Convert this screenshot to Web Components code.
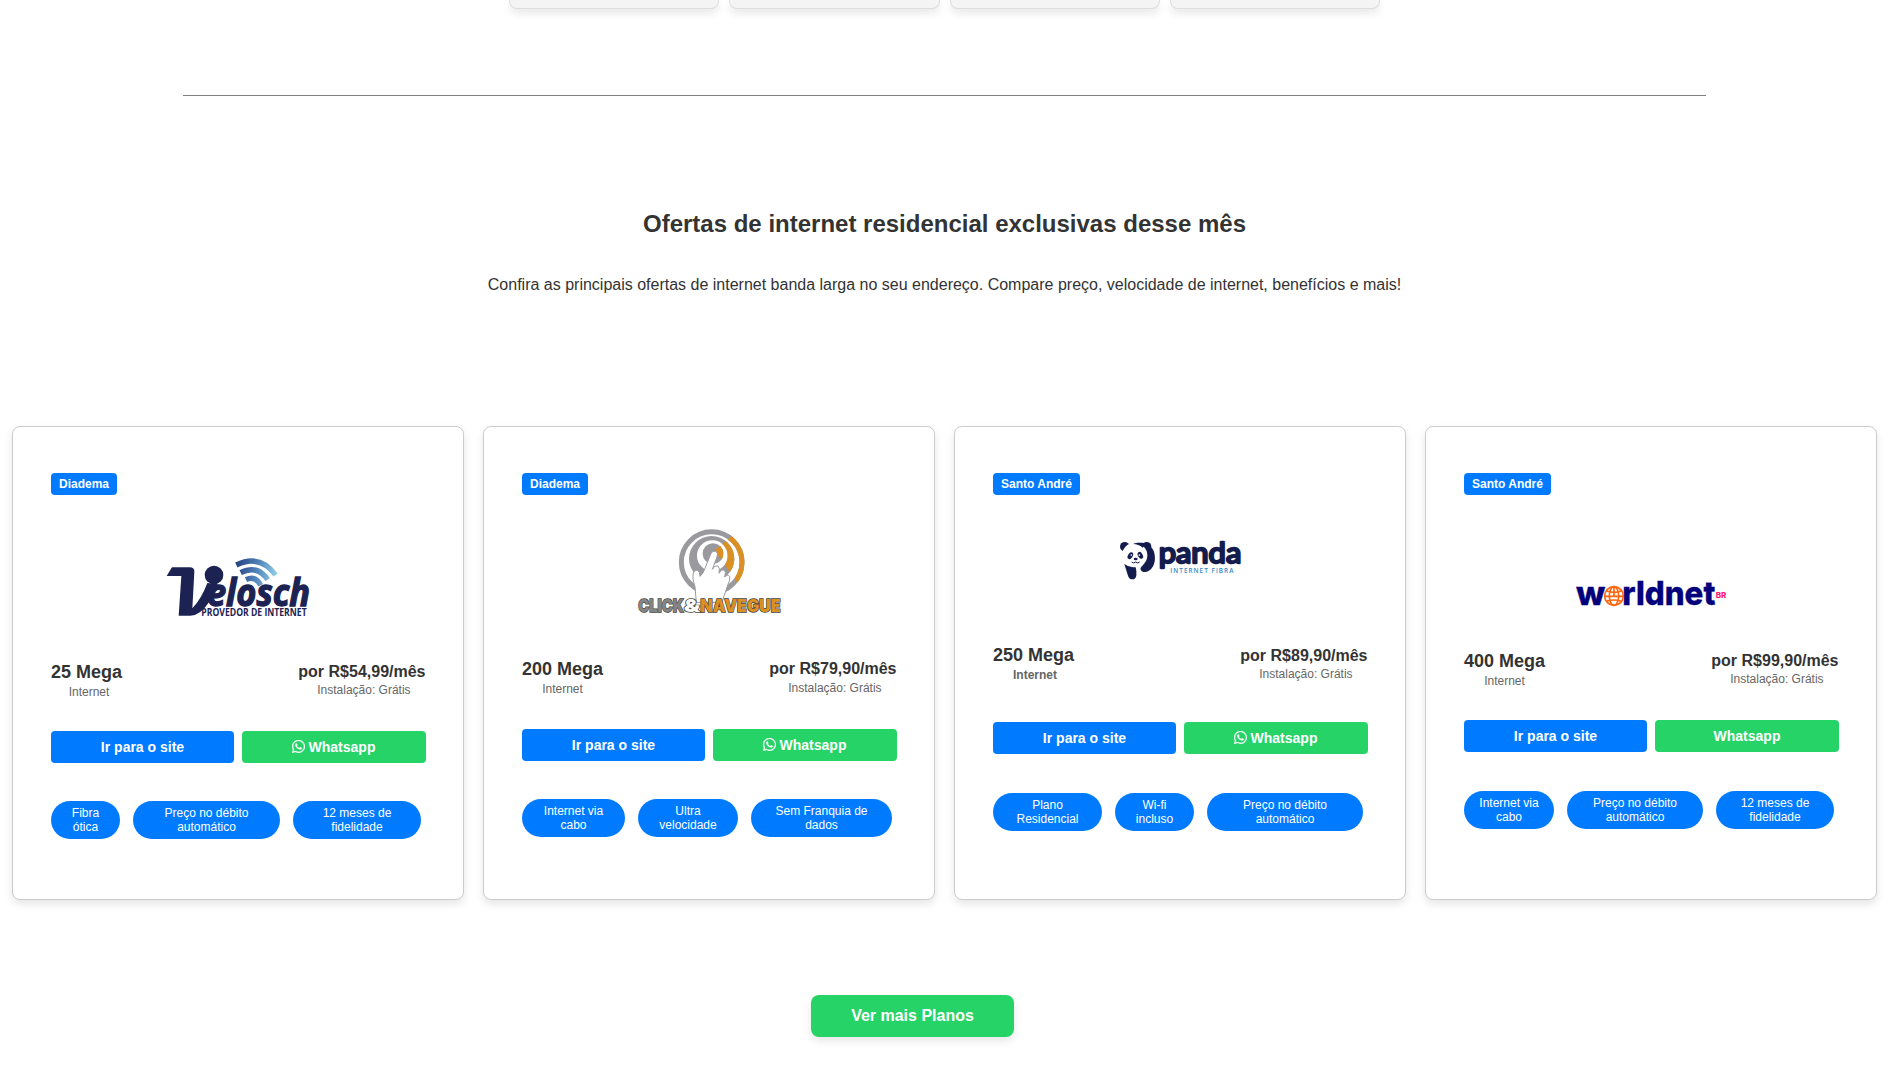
<!DOCTYPE html>
<html lang="pt-BR">
<head>
<meta charset="utf-8">
<title>Ofertas de internet</title>
<style>
html{overflow:hidden;background:#fff}
body{margin:0;font-family:"Liberation Sans",Arial,sans-serif;color:#333}
</style>
</head>
<body>
<offers-page></offers-page>

<template id="t-velosch"><svg>
  <g transform="translate(150 545) scale(.33333)">
    <defs><linearGradient id="w" gradientUnits="userSpaceOnUse" x1="255" y1="60" x2="380" y2="90"><stop offset="0" stop-color="#26407f"/><stop offset=".5" stop-color="#4d80b8"/><stop offset="1" stop-color="#93d0e8"/></linearGradient></defs>
    <path fill="#1c2353" d="M50 93 66 67H119Q134 67 133 81L127 190Q154 162 172 114L203 117 178 170Q150 212 121 212H86L94 93Z"/>
    <circle cx="192" cy="90" r="28" fill="#1c2353"/>
    <g fill="none" stroke="url(#w)" stroke-width="16">
      <path d="M259 60Q330 26 377 90"/><path d="M272 83Q323 58 353 104"/><path d="M288 104Q317 91 332 121"/>
    </g>
    <g font-family="Open Sans,sans-serif" font-weight="700" fill="#1c2353">
      <text x="171" y="183" font-size="115" font-style="italic" stroke="#1c2353" stroke-width="4" textLength="309" lengthAdjust="spacingAndGlyphs">elosch</text>
      <text x="154" y="212" font-size="29" textLength="316" lengthAdjust="spacingAndGlyphs">PROVEDOR DE INTERNET</text>
    </g>
  </g>
</svg></template>

<template id="t-click"><svg>
  <g transform="translate(620 515) scale(.33333)">
    <defs>
      <clipPath id="o"><path d="M284 106 345 56H400V250L352 203Z"/></clipPath>
      <g id="rings"><circle cx="275" cy="141.5" r="91" fill="none" stroke-width="15"/><path fill-rule="evenodd" stroke="none" d="M207 131A68 68 0 1 1 343 131A68 68 0 1 1 207 131ZM231 122A46 46 0 1 0 323 122A46 46 0 1 0 231 122Z"/><circle cx="279" cy="116" r="31" stroke="none"/></g>
    </defs>
    <use href="#rings" fill="#9a999d" stroke="#9a999d"/>
    <g clip-path="url(#o)"><use href="#rings" fill="#da9022" stroke="#da9022"/></g>
    <path fill="#fff" stroke="#9a999d" stroke-width="3" d="M229 262 225 215Q216 190 220 174Q224 163 233 166Q240 171 240 184Q250 176 255 160L272 117Q278 105 288 109Q295 114 291 126L277 163Q284 149 294 153Q301 159 297 175Q304 161 313 165Q319 170 314 186Q323 176 329 185Q331 196 324 208Q315 235 306 262Z"/>
    <g font-family="Inter,sans-serif" font-weight="900" font-size="53" stroke="#45433f" stroke-width="4" paint-order="stroke">
      <text x="55" y="290" fill="#858585" textLength="137" lengthAdjust="spacingAndGlyphs">CLICK</text>
      <text x="241" y="290" fill="#da9022" textLength="241" lengthAdjust="spacingAndGlyphs">NAVEGUE</text>
      <text x="191" y="290" fill="#fff" textLength="49" lengthAdjust="spacingAndGlyphs">&amp;</text>
    </g>
  </g>
</svg></template>

<template id="t-panda"><svg>
  <g transform="translate(1100 525) scale(.33333)">
    <g fill="#141b4d">
      <circle cx="74" cy="65" r="14"/><circle cx="140" cy="65" r="14"/>
      <path d="M104 57C118 50 150 50 162 80C172 116 154 142 131 141C119 137 119 127 128 122Z"/>
      <circle cx="104" cy="91" r="38" fill="#fff"/>
      <path d="M99 57Q120 47 134 62L128 68Q116 57 99 57Z"/>
      <path d="M73 117Q88 129 106 126Q110 132 109 152Q107 163 97 163Q87 163 84 152Z"/>
      <ellipse cx="91" cy="92" rx="7" ry="11" transform="rotate(32 91 92)"/><ellipse cx="121" cy="91" rx="7" ry="11" transform="rotate(-30 121 91)"/>
      <ellipse cx="107" cy="102" rx="6" ry="4"/>
    </g>
    <g fill="#fff"><circle cx="94" cy="90" r="2.5"/><circle cx="118" cy="90" r="2.5"/></g>
    <path d="M95 111Q101 117 107 111Q113 117 119 111" fill="none" stroke="#141b4d" stroke-width="3"/>
    <text x="176" y="115" font-family="Lato,sans-serif" font-weight="400" font-size="86" fill="#141b4d" stroke="#141b4d" stroke-width="7" stroke-linejoin="round" textLength="248" lengthAdjust="spacingAndGlyphs">panda</text>
    <text x="211" y="143" font-family="Open Sans,sans-serif" font-weight="600" font-size="19" fill="#3286c8" textLength="189">INTERNET FIBRA</text>
  </g>
</svg></template>

<template id="t-worldnet"><svg>
  <g transform="translate(1560 565) scale(.33333)">
    <g font-family="Inter,sans-serif" font-weight="800" fill="#04007c">
      <text x="48" y="120" font-size="100" stroke="#04007c" stroke-width="1" textLength="88" lengthAdjust="spacingAndGlyphs">w</text>
      <text x="187" y="120" font-size="100" stroke="#04007c" stroke-width="1" textLength="279" lengthAdjust="spacingAndGlyphs">rldnet</text>
      <text x="467" y="100" font-size="24" fill="#ff1a78" textLength="32" lengthAdjust="spacingAndGlyphs">BR</text>
    </g>
    <circle cx="162" cy="93" r="30" fill="#fff"/>
    <g fill="none" stroke="#ff650f" stroke-width="5"><circle cx="162" cy="93" r="28"/><ellipse cx="162" cy="93" rx="14" ry="28"/><path d="M162 65V94M134 94H190M140 78Q162 86 184 78M140 109Q162 101 184 109"/></g>
  </g>
</svg></template>

<script>
class BaseElement extends HTMLElement {
  connectedCallback() {
    if (!this.shadowRoot) this.attachShadow({mode: 'open'}).innerHTML = this.render();
  }
}

customElements.define('top-cards', class extends BaseElement {
  render() {
    return `<style>
      :host{display:flex;justify-content:center;gap:10px;height:9px}
      div{box-sizing:border-box;width:210.33px;height:9px;background:#f4f4f4;border:1px solid #ddd;border-top:0;border-radius:0 0 8px 8px;box-shadow:0 4px 8px rgba(0,0,0,.1)}
    </style><div></div><div></div><div></div><div></div>`;
  }
});

customElements.define('city-badge', class extends BaseElement {
  render() {
    return `<style>
      :host{display:block;box-sizing:border-box;align-self:flex-start;height:22px;padding:4px 8px;border-radius:4px;background:#007bff;color:#fff;font:bold 12px/14px "Liberation Sans",Arial,sans-serif}
    </style><slot></slot>`;
  }
});

customElements.define('action-button', class extends BaseElement {
  render() {
    const icon = this.hasAttribute('icon') ? `<svg viewBox="0 32 448 448" aria-hidden="true"><path d="M380.9 97.1C339 55.1 283.2 32 223.9 32c-122.4 0-222 99.6-222 222 0 39.1 10.2 77.3 29.6 111L0 480l117.7-30.9c32.4 17.7 68.9 27 106.1 27h.1c122.3 0 224.1-99.6 224.1-222 0-59.3-25.2-115-67.1-157zm-157 341.6c-33.2 0-65.7-8.9-94-25.7l-6.7-4-69.8 18.3L72 359.2l-4.4-7c-18.5-29.4-28.2-63.3-28.2-98.2 0-101.7 82.8-184.5 184.6-184.5 49.3 0 95.6 19.2 130.4 54.1 34.8 34.9 56.2 81.2 56.1 130.5 0 101.8-84.9 184.6-186.6 184.6zm101.2-138.2c-5.5-2.8-32.8-16.2-37.9-18-5.1-1.9-8.8-2.8-12.5 2.8-3.7 5.6-14.3 18-17.6 21.8-3.2 3.7-6.5 4.2-12 1.4-32.6-16.3-54-29.1-75.5-66-5.7-9.8 5.7-9.1 16.3-30.3 1.8-3.7.9-6.9-.5-9.7-1.4-2.8-12.5-30.1-17.1-41.2-4.5-10.8-9.1-9.3-12.5-9.5-3.2-.2-6.9-.2-10.6-.2-3.7 0-9.7 1.4-14.8 6.9-5.1 5.6-19.4 19-19.4 46.3 0 27.3 19.9 53.7 22.6 57.4 2.8 3.7 39.1 59.7 94.8 83.8 35.2 15.2 49 16.5 66.6 13.9 10.7-1.6 32.8-13.4 37.4-26.4 4.6-13 4.6-24.1 3.2-26.4-1.3-2.5-5-3.9-10.5-6.6z"/></svg>` : '';
    return `<style>
      :host{display:flex;align-items:center;justify-content:center;gap:4px;height:32px;border-radius:4px;background:#007bff;color:#fff;font:bold 14px/16px "Liberation Sans",Arial,sans-serif}
      :host([kind=whatsapp]){background:#25d366}
      svg{width:13px;height:13px;fill:#fff;stroke:#fff;stroke-width:8;margin:-1px 0 0 -1px}
    </style>${icon}<span><slot></slot></span>`;
  }
});

customElements.define('benefit-pill', class extends BaseElement {
  render() {
    return `<style>
      :host{display:flex;flex:none;box-sizing:border-box;flex-direction:column;align-items:center;justify-content:center;height:38px;padding-bottom:1px;border-radius:20px;background:#007bff;color:#fff;font:12px/14px "Liberation Sans",Arial,sans-serif;text-align:center}
    </style><slot></slot>`;
  }
});

customElements.define('provider-logo', class extends BaseElement {
  render() {
    const a = n => this.getAttribute(n);
    const art = document.getElementById('t-' + a('name')).content.querySelector('svg').innerHTML;
    return `<style>:host{display:block}svg{display:block}</style>
      <svg role="img" aria-label="${a('name')}" width="374" height="${a('height')}" viewBox="${a('x')} 495 374 ${a('height')}">${art}</svg>`;
  }
});

customElements.define('plan-card', class extends BaseElement {
  render() {
    const d = this.plan;
    return `<style>
      :host{display:flex;flex-direction:column;box-sizing:border-box;width:452px;height:474px;flex:none;padding:46px 37px 0 38px;border:1px solid #ccc;border-radius:8px;background:#fff;box-shadow:0 4px 8px rgba(0,0,0,.1)}
      .row{display:flex;justify-content:space-between;align-items:flex-start;height:${d.actions - d.top}px}
      .col{display:flex;flex-direction:column;align-items:center;color:#666;font-size:12px;line-height:14px;white-space:nowrap}
      .col b{color:#333}
      .speed b{font-size:18px;line-height:20px;margin-bottom:3px}
      .speed span{font-weight:${d.strong ? 'bold' : 'normal'};margin-left:${d.shift}px}
      .price{padding-top:${d.priceTop}px;margin-right:.5px}
      .price b{font-size:16px;line-height:18px;margin-bottom:${d.priceGap}px}
      .price span{margin-left:4px}
      .actions{display:grid;grid-template-columns:183px 184px;gap:8px}
      .pills{display:flex;gap:13px;margin-top:${d.pills - d.actions - 32}px}
    </style>
    <city-badge>${d.city}</city-badge>
    <provider-logo name="${d.logo}" x="${d.x}" height="${d.top - 495}"></provider-logo>
    <div class="row">
      <div class="col speed"><b>${d.speed} Mega</b><span>Internet</span></div>
      <div class="col price"><b>por R$${d.price}/mês</b><span>Instalação: Grátis</span></div>
    </div>
    <div class="actions"><action-button>Ir para o site</action-button><action-button kind="whatsapp" ${d.icon ? 'icon' : ''}>Whatsapp</action-button></div>
    <div class="pills">${d.items.map(([w, a, b]) => `<benefit-pill style="width:${w}px"><span>${a}</span><span>${b}</span></benefit-pill>`).join('')}</div>`;
  }
});

const plans = [
  {city:'Diadema', logo:'velosch', x:51, top:662, speed:25, price:'54,99', shift:5, priceTop:1, priceGap:2, actions:731, pills:801, icon:true,
   items:[[69,'Fibra','ótica'],[147,'Preço no débito','automático'],[128,'12 meses de','fidelidade']]},
  {city:'Diadema', logo:'click', x:522, top:659, speed:200, price:'79,90', shift:0, priceTop:1, priceGap:3, actions:729, pills:799, icon:true,
   items:[[103,'Internet via','cabo'],[100,'Ultra','velocidade'],[141,'Sem Franquia de','dados']]},
  {city:'Santo André', logo:'panda', x:993, top:645, speed:250, price:'89,90', shift:3, priceTop:2, priceGap:2, actions:722, pills:793, icon:true, strong:true,
   items:[[109,'Plano','Residencial'],[79,'Wi-fi','incluso'],[156,'Preço no débito','automático']]},
  {city:'Santo André', logo:'worldnet', x:1464, top:651, speed:400, price:'99,90', shift:0, priceTop:1, priceGap:2, actions:720, pills:791, icon:false,
   items:[[90,'Internet via','cabo'],[136,'Preço no débito','automático'],[118,'12 meses de','fidelidade']]}
];

customElements.define('plan-list', class extends HTMLElement {
  connectedCallback() {
    const root = this.attachShadow({mode: 'open'});
    root.innerHTML = `<style>:host{display:flex;gap:19px;padding-left:12px}</style>`;
    for (const plan of plans) {
      const card = document.createElement('plan-card');
      card.plan = plan;
      root.append(card);
    }
  }
});

customElements.define('offers-page', class extends BaseElement {
  render() {
    return `<style>
      :host{display:block;width:1889px;height:1070px}
      hr{width:1523px;height:1px;margin:86px auto 0;border:0;background:#808080}
      h2{margin:114px 0 0;font-size:24px;line-height:28px;text-align:center}
      p{margin:38px 0 0;font-size:16px;line-height:18px;text-align:center}
      plan-list{margin-top:132px}
      .more{display:flex;align-items:center;justify-content:center;width:203px;height:42px;margin:95px 0 0 811px;border-radius:8px;background:#25d366;color:#fff;font-weight:bold;font-size:16px;line-height:18px;box-shadow:0 4px 8px rgba(0,0,0,.1)}
    </style>
    <top-cards></top-cards>
    <hr>
    <h2>Ofertas de internet residencial exclusivas desse mês</h2>
    <p>Confira as principais ofertas de internet banda larga no seu endereço. Compare preço, velocidade de internet, benefícios e mais!</p>
    <plan-list></plan-list>
    <div class="more">Ver mais Planos</div>`;
  }
});
</script>
</body>
</html>
